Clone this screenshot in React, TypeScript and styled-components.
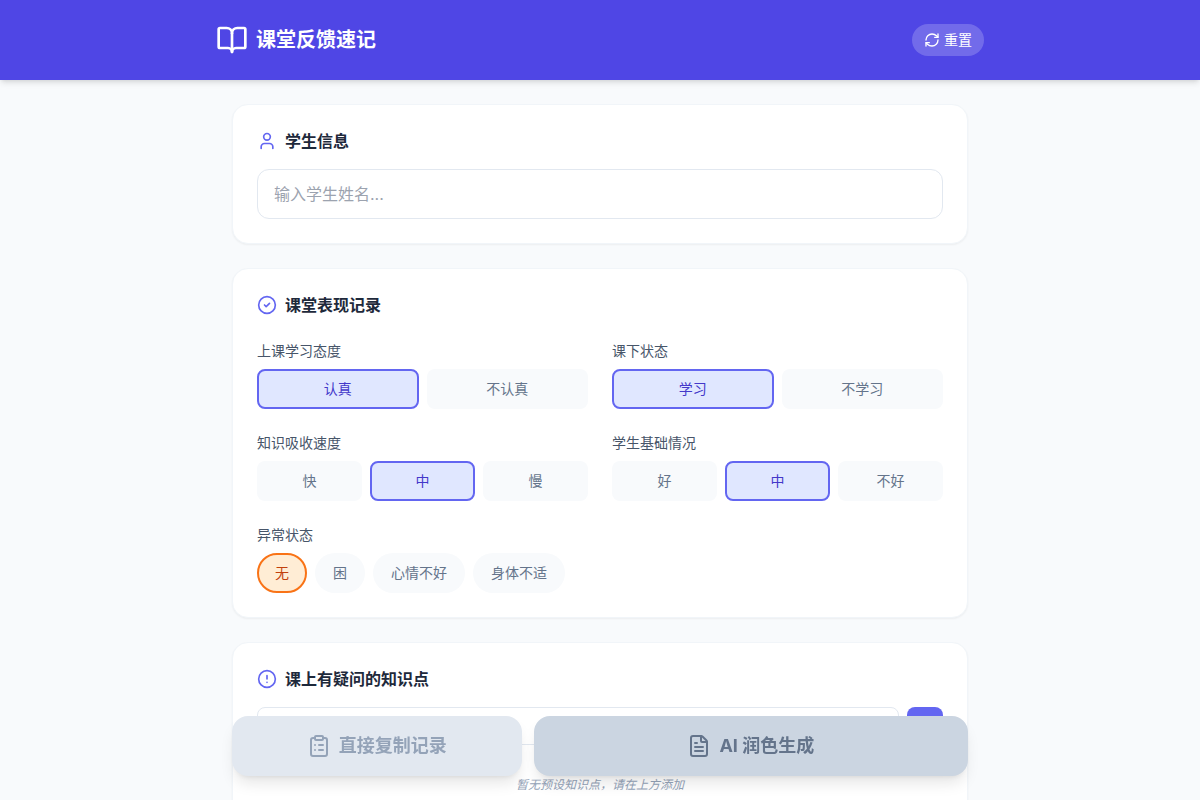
import React, { useState } from "react";
import styled, { createGlobalStyle, css } from "styled-components";
import {
  BookOpen,
  CircleAlert,
  CircleCheck,
  ClipboardList,
  FileText,
  Plus,
  RefreshCw,
  User,
} from "lucide-react";

const GlobalStyle = createGlobalStyle`
  *, *::before, *::after { box-sizing: border-box; }
  body {
    margin: 0;
    background: #f8fafc;
    color: #1e293b;
    font-family: Inter, "Noto Sans CJK SC", sans-serif;
    font-size: 16px;
    line-height: 24px;
  }
  button, input { font: inherit; }
  button { cursor: pointer; }
`;

const Page = styled.div`
  min-height: 100vh;
  padding-bottom: 128px;
`;

const Header = styled.header`
  position: sticky;
  top: 0;
  z-index: 10;
  padding: 24px;
  background: #4f46e5;
  color: #fff;
  box-shadow: 0 4px 6px -1px rgba(0, 0, 0, 0.1), 0 2px 4px -2px rgba(0, 0, 0, 0.1);
`;

const HeaderInner = styled.div`
  display: flex;
  align-items: center;
  justify-content: space-between;
  max-width: 768px;
  margin: 0 auto;
`;

const Brand = styled.h1`
  display: flex;
  align-items: center;
  gap: 8px;
  margin: 0;
  font-size: 20px;
  line-height: 28px;
  font-weight: 700;
`;

const ResetButton = styled.button`
  display: flex;
  align-items: center;
  gap: 4px;
  padding: 6px 12px;
  border: 0;
  border-radius: 16px;
  background: rgba(255, 255, 255, 0.2);
  color: #fff;
  font-size: 14px;
  line-height: 20px;
`;

const Main = styled.main`
  display: flex;
  flex-direction: column;
  gap: 24px;
  max-width: 768px;
  margin: 24px auto 0;
  padding: 0 16px;
`;

const Card = styled.section`
  padding: 24px;
  border: 1px solid #f1f5f9;
  border-radius: 16px;
  background: #fff;
  box-shadow: 0 1px 2px 0 rgba(0, 0, 0, 0.05);
`;

const CardTitle = styled.h2<{ $space?: number }>`
  display: flex;
  align-items: center;
  gap: 8px;
  margin: 0 0 ${(p) => p.$space ?? 16}px;
  font-size: 16px;
  line-height: 24px;
  font-weight: 700;

  svg { color: #6366f1; }
`;

const TextInput = styled.input<{ $compact?: boolean }>`
  display: block;
  flex: 1;
  width: 100%;
  min-width: 0;
  padding: ${(p) => (p.$compact ? "8px 12px" : "12px 16px")};
  border: 1px solid #e2e8f0;
  border-radius: ${(p) => (p.$compact ? 8 : 12)}px;
  background: #fff;
  color: #1e293b;
  font-size: ${(p) => (p.$compact ? 14 : 16)}px;
  line-height: ${(p) => (p.$compact ? 20 : 24)}px;
  height: ${(p) => (p.$compact ? 38 : 50)}px;

  &::placeholder { color: #9ca3af; opacity: 1; }
`;

const FieldGrid = styled.div`
  display: grid;
  grid-template-columns: 1fr 1fr;
  gap: 24px;

  @media (max-width: 640px) { grid-template-columns: 1fr; }
`;

const Field = styled.fieldset<{ $wide?: boolean }>`
  min-width: 0;
  margin: 0;
  padding: 0;
  border: 0;
  ${(p) => p.$wide && css`grid-column: 1 / -1;`}
`;

const Legend = styled.legend`
  display: block;
  margin-bottom: 8px;
  padding: 0;
  color: #475569;
  font-size: 14px;
  line-height: 20px;
`;

const Options = styled.div`
  display: flex;
  flex-wrap: wrap;
  gap: 8px;
`;

const OptionButton = styled.button<{ $active: boolean; $pill?: boolean }>`
  flex: ${(p) => (p.$pill ? "none" : "1")};
  padding: 8px ${(p) => (p.$pill ? 16 : 12)}px;
  border: 2px solid transparent;
  border-radius: ${(p) => (p.$pill ? 20 : 8)}px;
  background: #f8fafc;
  color: #64748b;
  font-size: 14px;
  line-height: 20px;

  ${(p) => p.$active && !p.$pill && css`
    border-color: #6366f1;
    background: #e0e7ff;
    color: #4338ca;
  `}
  ${(p) => p.$active && p.$pill && css`
    border-color: #f97316;
    background: #ffedd5;
    color: #c2410c;
  `}
`;

const AddRow = styled.form`
  display: flex;
  gap: 8px;
  margin-bottom: 16px;
`;

const AddButton = styled.button`
  display: flex;
  align-items: center;
  padding: 8px;
  border: 0;
  border-radius: 8px;
  background: #6366f1;
  color: #fff;
`;

const Hint = styled.p`
  margin: 0;
  padding: 16px 0;
  color: #94a3b8;
  font-size: 12px;
  line-height: 16px;
  font-style: italic;
  text-align: center;
`;

const ActionBar = styled.div`
  position: fixed;
  z-index: 20;
  right: 0;
  bottom: 24px;
  left: 0;
  display: flex;
  gap: 12px;
  max-width: 768px;
  margin: 0 auto;
  padding: 0 16px;
`;

const ActionButton = styled.button<{ $primary?: boolean }>`
  display: flex;
  flex: ${(p) => (p.$primary ? 3 : 2)} 1 0;
  align-items: center;
  justify-content: center;
  gap: 8px;
  padding: 16px 0;
  border: 0;
  border-radius: 16px;
  background: ${(p) => (p.$primary ? "#cbd5e1" : "#e2e8f0")};
  color: ${(p) => (p.$primary ? "#64748b" : "#94a3b8")};
  font-size: 18px;
  line-height: 28px;
  font-weight: 700;
  box-shadow: 0 10px 15px -3px rgba(0, 0, 0, 0.1), 0 4px 6px -4px rgba(0, 0, 0, 0.1);
`;

type Group = { name: string; options: string[]; initial: string; pill?: boolean };

const groups: Group[] = [
  { name: "上课学习态度", options: ["认真", "不认真"], initial: "认真" },
  { name: "课下状态", options: ["学习", "不学习"], initial: "学习" },
  { name: "知识吸收速度", options: ["快", "中", "慢"], initial: "中" },
  { name: "学生基础情况", options: ["好", "中", "不好"], initial: "中" },
  { name: "异常状态", options: ["无", "困", "心情不好", "身体不适"], initial: "无", pill: true },
];

const initialValues = () =>
  Object.fromEntries(groups.map((g) => [g.name, g.initial])) as Record<string, string>;

export default function App() {
  const [student, setStudent] = useState("");
  const [topic, setTopic] = useState("");
  const [values, setValues] = useState(initialValues);

  const reset = () => {
    setStudent("");
    setTopic("");
    setValues(initialValues());
  };

  return (
    <Page>
      <GlobalStyle />
      <Header>
        <HeaderInner>
          <Brand>
            <BookOpen size={32} />
            课堂反馈速记
          </Brand>
          <ResetButton type="button" onClick={reset}>
            <RefreshCw size={16} />
            重置
          </ResetButton>
        </HeaderInner>
      </Header>

      <Main>
        <Card>
          <CardTitle id="student-title">
            <User size={20} />
            学生信息
          </CardTitle>
          <TextInput
            type="text"
            aria-labelledby="student-title"
            placeholder="输入学生姓名..."
            value={student}
            onChange={(e) => setStudent(e.target.value)}
          />
        </Card>

        <Card>
          <CardTitle $space={24}>
            <CircleCheck size={20} />
            课堂表现记录
          </CardTitle>
          <FieldGrid>
            {groups.map((group) => (
              <Field key={group.name} $wide={group.pill}>
                <Legend>{group.name}</Legend>
                <Options>
                  {group.options.map((option) => (
                    <OptionButton
                      key={option}
                      type="button"
                      $pill={group.pill}
                      $active={values[group.name] === option}
                      aria-pressed={values[group.name] === option}
                      onClick={() => setValues({ ...values, [group.name]: option })}
                    >
                      {option}
                    </OptionButton>
                  ))}
                </Options>
              </Field>
            ))}
          </FieldGrid>
        </Card>

        <Card>
          <CardTitle id="topic-title">
            <CircleAlert size={20} />
            课上有疑问的知识点
          </CardTitle>
          <AddRow onSubmit={(e) => e.preventDefault()}>
            <TextInput
              $compact
              type="text"
              aria-labelledby="topic-title"
              value={topic}
              onChange={(e) => setTopic(e.target.value)}
            />
            <AddButton type="submit" aria-label="添加">
              <Plus size={20} />
            </AddButton>
          </AddRow>
          <Hint>暂无预设知识点，请在上方添加</Hint>
        </Card>
      </Main>

      <ActionBar>
        <ActionButton type="button">
          <ClipboardList size={24} />
          直接复制记录
        </ActionButton>
        <ActionButton type="button" $primary>
          <FileText size={24} />
          AI 润色生成
        </ActionButton>
      </ActionBar>
    </Page>
  );
}
